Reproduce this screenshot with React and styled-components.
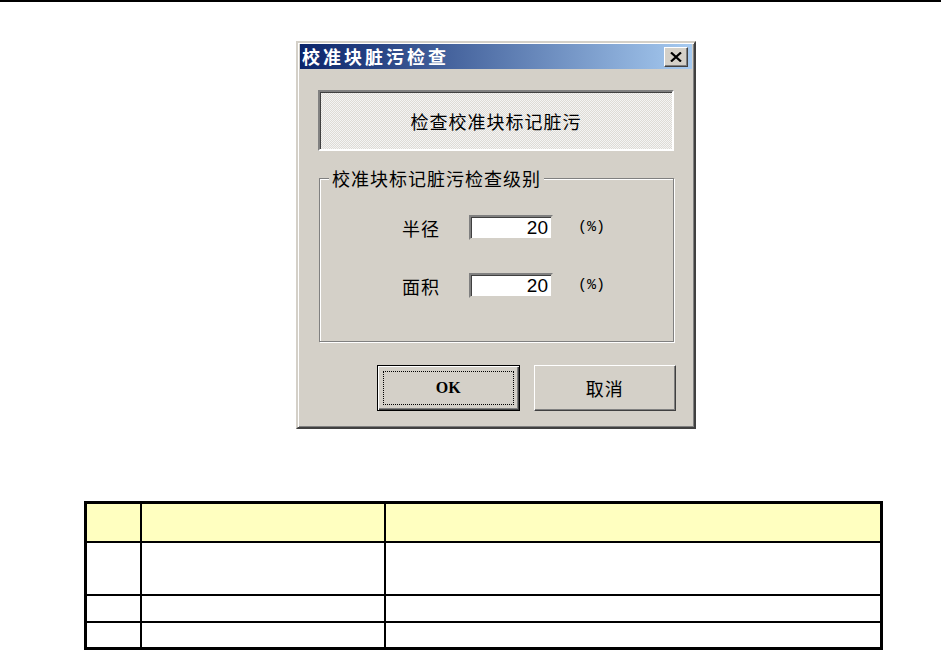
import styled, { createGlobalStyle } from "styled-components";

const GlobalStyle = createGlobalStyle`
  html, body { margin: 0; padding: 0; background: #fff; }
  body { font-family: "Noto Sans CJK SC", "Liberation Sans", sans-serif; }
  * { box-sizing: border-box; }
`;

const cjk = `"Noto Sans CJK SC", "Liberation Sans", sans-serif`;

function App() {
  return (
    <Page>
      <GlobalStyle />
      <Rule />

      <Dialog>
        <TitleBar>
          <TitleText>校准块脏污检查</TitleText>
          <CloseButton>
            <svg width="12" height="10" viewBox="0 0 12 10">
              <path d="M1 0.5 L11 9.5 M11 0.5 L1 9.5" stroke="#000" strokeWidth="2.2" />
            </svg>
          </CloseButton>
        </TitleBar>

        <Body>
          <Banner>检查校准块标记脏污</Banner>

          <GroupBox>
            <Caption>校准块标记脏污检查级别</Caption>
            <Field>
              <FieldLabel>半径</FieldLabel>
              <NumberBox>20</NumberBox>
              <Unit>(%)</Unit>
            </Field>
            <Field $gap={33}>
              <FieldLabel>面积</FieldLabel>
              <NumberBox>20</NumberBox>
              <Unit>(%)</Unit>
            </Field>
          </GroupBox>

          <Buttons>
            <Button $default>
              <FocusRing>OK</FocusRing>
            </Button>
            <Button>取消</Button>
          </Buttons>
        </Body>
      </Dialog>

      <Grid>
        <Cell $head />
        <Cell $head />
        <Cell $head />
        <Cell />
        <Cell />
        <Cell />
        <Cell />
        <Cell />
        <Cell />
        <Cell />
        <Cell />
        <Cell />
      </Grid>
    </Page>
  );
}

export default App;

const Page = styled.div`
  width: 941px;
  min-height: 651px;
  overflow: hidden;
`;

const Rule = styled.div`
  height: 2px;
  background: #000;
`;

const Dialog = styled.div`
  width: 400px;
  height: 388px;
  margin: 39px 0 0 296px;
  background: #d4d0c8;
  border: 2px solid;
  border-color: #d4d0c8 #404040 #404040 #d4d0c8;
  box-shadow: inset 1px 1px 0 #fff, inset -1px -1px 0 #808080;
  padding: 1px 2px 2px;
  display: flex;
  flex-direction: column;
`;

const TitleBar = styled.div`
  height: 25px;
  display: flex;
  align-items: center;
  justify-content: space-between;
  padding: 0 4px 0 2px;
  background: linear-gradient(to right, #0a246a, #a6caf0);
`;

const TitleText = styled.span`
  font-family: ${cjk};
  font-weight: 700;
  font-size: 18px;
  letter-spacing: 3px;
  color: #fff;
  line-height: 25px;
`;

const CloseButton = styled.div`
  width: 24px;
  height: 20px;
  background: #d4d0c8;
  border: 1px solid;
  border-color: #fff #404040 #404040 #fff;
  box-shadow: inset -1px -1px 0 #808080;
  display: flex;
  align-items: center;
  justify-content: center;
`;

const Body = styled.div`
  padding: 21px 18px 0;
  display: flex;
  flex-direction: column;
`;

const Banner = styled.div`
  height: 61px;
  display: flex;
  align-items: center;
  justify-content: center;
  font-family: ${cjk};
  font-size: 18px;
  letter-spacing: 1px;
  color: #000;
  border: 2px solid;
  border-color: #808080 #fff #fff #808080;
  box-shadow: inset 1px 1px 0 #404040;
  background: repeating-conic-gradient(#dedbd5 0 25%, #f4f4f4 0 50%) 0 0 / 2px 2px;
`;

const GroupBox = styled.div`
  margin-top: 27px;
  margin-left: 1px;
  height: 164px;
  border: 1px solid #808080;
  box-shadow: inset 1px 1px 0 #fff, 1px 1px 0 #fff;
  display: flex;
  flex-direction: column;
`;

const Caption = styled.div`
  align-self: flex-start;
  margin: -11px 0 0 9px;
  padding: 0 3px;
  line-height: 20px;
  background: #d4d0c8;
  font-family: ${cjk};
  font-size: 18px;
  letter-spacing: 1px;
  color: #000;
`;

const Field = styled.div`
  display: flex;
  align-items: center;
  height: 25px;
  margin-top: ${(p) => p.$gap ?? 27}px;
  padding-left: 82px;
`;

const FieldLabel = styled.span`
  width: 67px;
  font-family: ${cjk};
  font-size: 18px;
  letter-spacing: 1px;
  color: #000;
`;

const NumberBox = styled.div`
  width: 84px;
  height: 25px;
  background: #fff;
  border: 2px solid;
  border-color: #808080 #d4d0c8 #d4d0c8 #808080;
  box-shadow: inset 1px 1px 0 #404040;
  display: flex;
  align-items: center;
  justify-content: flex-end;
  padding-right: 3px;
  font-family: "Liberation Sans", Arial, sans-serif;
  font-size: 19px;
  color: #000;
`;

const Unit = styled.span`
  margin-left: 25px;
  font-family: "Liberation Mono", monospace;
  font-size: 15px;
  color: #000;
`;

const Buttons = styled.div`
  display: flex;
  gap: 14px;
  margin: 23px -2px 0 59px;
`;

const Button = styled.div`
  width: 143px;
  height: 46px;
  display: flex;
  align-items: center;
  justify-content: center;
  background: #d4d0c8;
  font-family: ${cjk};
  font-size: 18px;
  letter-spacing: 1px;
  color: #000;
  border: 1px solid;
  border-color: ${(p) => (p.$default ? "#000" : "#fff #404040 #404040 #fff")};
  box-shadow: ${(p) =>
    p.$default
      ? "inset 1px 1px 0 #fff, inset -1px -1px 0 #404040, inset -2px -2px 0 #808080"
      : "inset -1px -1px 0 #808080"};
  padding: ${(p) => (p.$default ? "5px" : "0")};
`;

const FocusRing = styled.div`
  width: 100%;
  height: 100%;
  border: 1px dotted #000;
  display: flex;
  align-items: center;
  justify-content: center;
  font-family: "Liberation Serif", serif;
  font-weight: 700;
  font-size: 16px;
  letter-spacing: 0;
`;

const Grid = styled.div`
  width: 799px;
  margin: 72px 0 0 84px;
  display: grid;
  grid-template-columns: 53px 242px 494px;
  grid-template-rows: 37px 51px 25px 24px;
  gap: 2px;
  border: 3px solid #000;
  background: #000;
`;

const Cell = styled.div`
  background: ${(p) => (p.$head ? "#ffffc0" : "#fff")};
`;
